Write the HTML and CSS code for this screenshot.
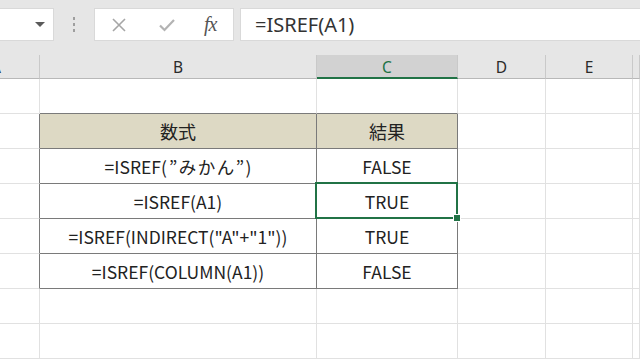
FILE: index.html
```html
<html>
  <head>
    <link rel="stylesheet" href="styles.css">
  </head>
  <body>
    <div class="toolbar">
      <div class="namebox"><span class="caret"></span></div>
      <div class="grip"><i></i><i></i><i></i></div>
      <div class="fx-buttons">
        <svg class="btn-icon" width="14" height="14" viewBox="0 0 14 14"><path d="M1 1 L13 13 M13 1 L1 13" stroke="#a6a6a6" stroke-width="1.6" fill="none"/></svg>
        <svg class="btn-icon" width="16" height="14" viewBox="0 0 16 14"><path d="M1 7.5 L5.5 12 L15 2" stroke="#b3b3b3" stroke-width="2.2" fill="none"/></svg>
        <span class="fx">fx</span>
      </div>
      <div class="formula">=ISREF(A1)</div>
    </div>

    <div class="sheet">
      <div class="colhead col-a"><span>A</span></div>
      <div class="colhead">B</div>
      <div class="colhead active">C</div>
      <div class="colhead">D</div>
      <div class="colhead">E</div>
      <div class="colhead"></div>

      <div class="cell"></div>
      <div class="cell edge-b"></div>
      <div class="cell edge-b"></div>
      <div class="cell"></div>
      <div class="cell"></div>
      <div class="cell"></div>

      <div class="cell edge-r"></div>
      <div class="cell tbl head jp">数式</div>
      <div class="cell tbl head jp">結果</div>
      <div class="cell"></div>
      <div class="cell"></div>
      <div class="cell"></div>

      <div class="cell edge-r"></div>
      <div class="cell tbl">=ISREF(<span class="jp wide">”みかん”</span>)</div>
      <div class="cell tbl">FALSE</div>
      <div class="cell"></div>
      <div class="cell"></div>
      <div class="cell"></div>

      <div class="cell edge-r"></div>
      <div class="cell tbl">=ISREF(A1)</div>
      <div class="cell tbl selected">TRUE</div>
      <div class="cell"></div>
      <div class="cell"></div>
      <div class="cell"></div>

      <div class="cell edge-r"></div>
      <div class="cell tbl">=ISREF(INDIRECT("A"+"1"))</div>
      <div class="cell tbl">TRUE</div>
      <div class="cell"></div>
      <div class="cell"></div>
      <div class="cell"></div>

      <div class="cell edge-r"></div>
      <div class="cell tbl">=ISREF(COLUMN(A1))</div>
      <div class="cell tbl">FALSE</div>
      <div class="cell"></div>
      <div class="cell"></div>
      <div class="cell"></div>

      <div class="cell"></div>
      <div class="cell"></div>
      <div class="cell"></div>
      <div class="cell"></div>
      <div class="cell"></div>
      <div class="cell"></div>

      <div class="cell"></div>
      <div class="cell"></div>
      <div class="cell"></div>
      <div class="cell"></div>
      <div class="cell"></div>
      <div class="cell"></div>
    </div>
  </body>
</html>
```

FILE: styles.css
```css
body { margin: 0; background: #fff; font-family: "Noto Sans", "Noto Sans CJK JP", sans-serif; overflow: hidden; }

.toolbar { height: 55px; background: #e6e6e6; display: flex; align-items: flex-start; padding-top: 8px; box-sizing: border-box; }
.namebox { width: 54px; height: 33px; background: #fff; border: 1px solid #d9d9d9; border-left: none; box-sizing: border-box; display: flex; align-items: center; justify-content: flex-end; padding-right: 8px; }
.caret { width: 0; height: 0; border-left: 5px solid transparent; border-right: 5px solid transparent; border-top: 5px solid #5a5a5a; }
.grip { width: 40px; height: 33px; display: flex; flex-direction: column; align-items: center; justify-content: center; gap: 3px; }
.grip i { width: 2px; height: 3px; background: #9e9e9e; }
.fx-buttons { width: 140px; height: 33px; background: #fff; border: 1px solid #d9d9d9; box-sizing: border-box; display: flex; align-items: center; padding-left: 17px; gap: 33px; }
.fx { font-family: "Liberation Serif", serif; font-style: italic; font-size: 20px; color: #555; letter-spacing: -1px; margin-left: -4px; }
.formula { flex: 1; height: 33px; margin-left: 6px; background: #fff; border: 1px solid #d9d9d9; border-right: none; box-sizing: border-box; padding-left: 14px; line-height: 31px; font-size: 20px; color: #333; }

.sheet { display: grid; grid-template-columns: 40px 277px 141px 88px 87px 1fr; grid-template-rows: 24px repeat(8, 35px); }
.colhead { background: #e6e6e6; border-right: 1px solid #c9c9c9; border-bottom: 1px solid #b8b8b8; box-sizing: border-box; text-align: center; font-size: 15.5px; line-height: 24px; color: #2b2b2b; }
.colhead.active { background: #d2d2d2; color: #217346; border-bottom: 2px solid #217346; }
.col-a { overflow: hidden; }
.col-a span { display: block; width: 20px; margin-left: -14px; }

.cell { border-right: 1px solid #e1e1e1; border-bottom: 1px solid #e1e1e1; box-sizing: border-box; display: flex; align-items: center; justify-content: center; font-family: "Noto Sans CJK JP", sans-serif; font-size: 17.5px; color: #222; white-space: nowrap; }
.edge-b { border-bottom-color: #7a7a7a; }
.edge-r { border-right-color: #7a7a7a; }
.tbl { border-right-color: #7a7a7a; border-bottom-color: #7a7a7a; }
.head { background: #ddd9c4; font-size: 18px; }
.jp { font-family: "Noto Sans CJK JP", sans-serif; }
.wide { letter-spacing: 1.5px; padding-left: 2px; }

.selected { position: relative; }
.selected::after { content: ""; position: absolute; left: -2px; top: -2px; right: -1px; bottom: -1px; border: 2px solid #217346; }
.selected::before { content: ""; position: absolute; right: -4px; bottom: -4px; width: 6px; height: 6px; background: #217346; border: 1px solid #fff; z-index: 1; }
```
